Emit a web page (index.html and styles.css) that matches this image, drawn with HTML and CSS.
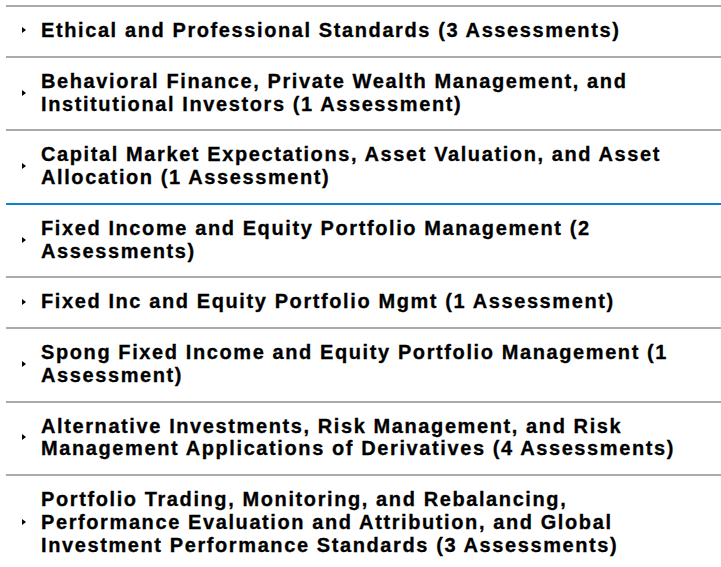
FILE: index.html
```html
<!DOCTYPE html>
<html lang="en">
<head>
<meta charset="utf-8">
<title>Assessments</title>
<link rel="stylesheet" href="styles.css">
</head>
<body>
<ul class="topics">
  <li class="topic"><span class="caret"></span><span class="label">Ethical and Professional Standards (3 Assessments)</span></li>
  <li class="topic"><span class="caret"></span><span class="label">Behavioral Finance, Private Wealth Management, and Institutional Investors (1 Assessment)</span></li>
  <li class="topic"><span class="caret"></span><span class="label">Capital Market Expectations, Asset Valuation, and Asset Allocation (1 Assessment)</span></li>
  <li class="topic topic-active"><span class="caret"></span><span class="label">Fixed Income and Equity Portfolio Management (2 Assessments)</span></li>
  <li class="topic"><span class="caret"></span><span class="label">Fixed Inc and Equity Portfolio Mgmt (1 Assessment)</span></li>
  <li class="topic"><span class="caret"></span><span class="label">Spong Fixed Income and Equity Portfolio Management (1 Assessment)</span></li>
  <li class="topic"><span class="caret"></span><span class="label">Alternative Investments, Risk Management, and Risk Management Applications of Derivatives (4 Assessments)</span></li>
  <li class="topic"><span class="caret"></span><span class="label">Portfolio Trading, Monitoring, and Rebalancing, Performance Evaluation and Attribution, and Global Investment Performance Standards (3 Assessments)</span></li>
</ul>
</body>
</html>
```

FILE: styles.css
```css
html, body {
  margin: 0;
  padding: 0;
  background: #ffffff;
}

body {
  padding: 5px 0 0 6px;
  font-family: "Liberation Sans", Arial, sans-serif;
  color: #000000;
}

.topics {
  list-style: none;
  margin: 0;
  padding: 0;
}

.topic {
  display: flex;
  align-items: center;
  border-top: 2px solid #aaaaaa;
  padding: 12px 0 14px 16px;
}

.topic-active {
  border-top-color: #0a84cc;
}

.caret {
  flex: none;
  width: 0;
  height: 0;
  border-top: 3px solid transparent;
  border-bottom: 3px solid transparent;
  border-left: 4px solid #000000;
  margin-right: 15px;
}

.label {
  width: 655px;
  font-size: 20px;
  font-weight: bold;
  line-height: 22.75px;
  letter-spacing: 1.6px;
  -webkit-text-stroke: 0.3px #000000;
}
```
